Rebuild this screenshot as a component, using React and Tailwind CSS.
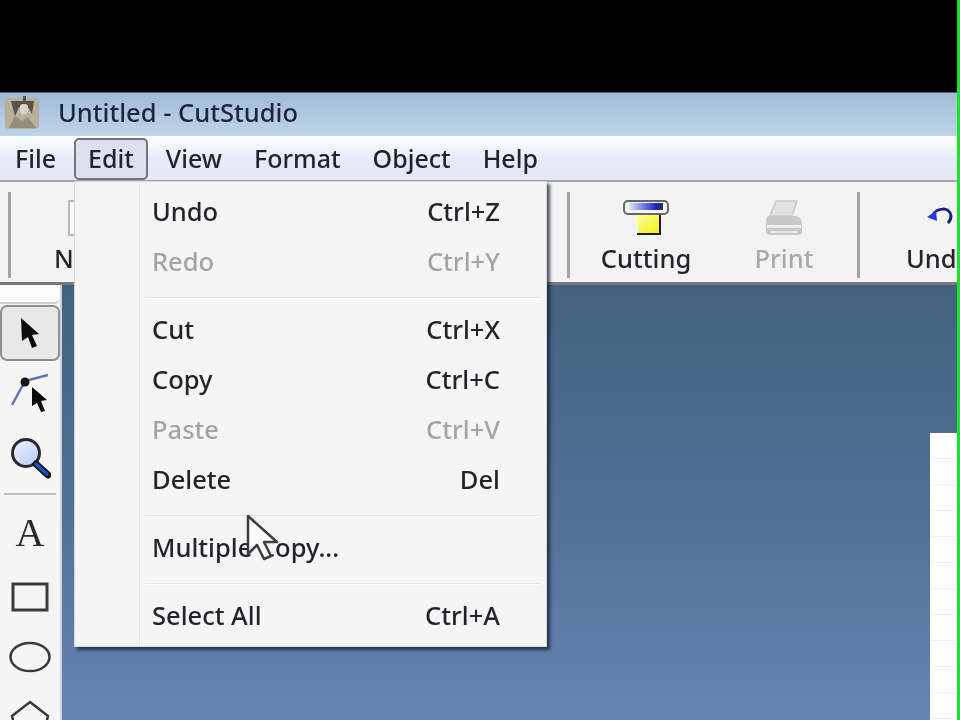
import React from 'react';

const FONT = 'font-["Noto_Sans","Open_Sans",sans-serif]';

const menuBar = ['File', 'Edit', 'View', 'Format', 'Object', 'Help'];

const MenuRow = ({ label, keys, off }) => (
    <div className={`h-[50px] flex items-center justify-between pl-[77px] pr-[46px] ${off ? 'text-[#a4a4a4]' : 'text-[#23232d]'}`}>
        <span>{label}</span>
        <span>{keys}</span>
    </div>
);

const MenuSep = () => (
    <div className="h-[18px] pt-[4px] flex items-center pl-[70px] pr-[6px]">
        <div className="h-[2px] w-full bg-[#e4e4e4] border-b border-white" />
    </div>
);

const Separator = ({ className }) => <div className={`w-[3px] h-[86px] mt-[10px] shrink-0 bg-[#a3a3a3] ${className}`} />;

const Logo = () => (
    <svg width="36" height="34" viewBox="0 0 36 34" className="ml-[4px]">
        <rect x="1" y="2" width="34" height="31" rx="4" fill="#b9b09c" />
        <path d="M7 5 H30 L28 18 L24 11 H15 L11 20 Z" fill="#57524a" />
        <rect x="16" y="8" width="8" height="10" rx="3" fill="#d8d4ca" />
        <path d="M5 32 L11 20 L18 25 L24 21 L32 32 Z" fill="#958d7b" />
        <rect x="19" y="0" width="3" height="5" fill="#57524a" />
    </svg>
);

const NewIcon = () => (
    <svg width="46" height="38" viewBox="0 0 46 38" className="ml-[14px] self-start">
        <rect x="1" y="2" width="30" height="34" fill="#fafafa" stroke="#b8b8b8" strokeWidth="2" />
    </svg>
);

const CuttingIcon = () => (
    <svg width="48" height="38" viewBox="0 0 48 38">
        <defs>
            <linearGradient id="cutBar" x1="0" x2="1" y1="0" y2="0">
                <stop offset="0" stopColor="#dfe3f6" />
                <stop offset="0.8" stopColor="#1c22c8" />
                <stop offset="1" stopColor="#333" />
            </linearGradient>
            <linearGradient id="cutPaper" x1="0" x2="1" y1="0" y2="1">
                <stop offset="0" stopColor="#ffffb0" />
                <stop offset="1" stopColor="#f4ee10" />
            </linearGradient>
        </defs>
        <path d="M14 14 H38 V34 H16 V22 H14 Z" fill="url(#cutPaper)" />
        <path d="M38 15 V35 H15" fill="none" stroke="#1a1a1a" strokeWidth="2" />
        <rect x="2" y="2" width="44" height="13" rx="4" fill="#f4f4f4" stroke="#666" strokeWidth="2" />
        <rect x="7" y="4" width="34" height="7" fill="url(#cutBar)" />
    </svg>
);

const PrintIcon = () => (
    <svg width="40" height="38" viewBox="0 0 40 38">
        <path d="M12 2 H33 L28 17 H6 Z" fill="#e2e2e2" stroke="#cacaca" strokeWidth="1.5" />
        <path d="M4 17 H32 Q38 18 38 26 V33 Q38 36 34 36 H6 Q2 36 2 32 V22 Q2 18 4 17 Z" fill="#c8c8c8" />
        <rect x="3" y="26" width="34" height="3" fill="#ececec" />
        <rect x="6" y="32" width="28" height="2" fill="#e4e4e4" />
    </svg>
);

const UndoIcon = () => (
    <svg width="28" height="20" viewBox="0 0 28 20">
        <path d="M7 9 C10 2 24 0 25 10 C25 13 24 15 22 17" fill="none" stroke="#1c1f78" strokeWidth="3" />
        <path d="M1 11 L10 5 L11 15 Z" fill="#2438e0" />
    </svg>
);

const ArrowIcon = () => (
    <svg width="22" height="32" viewBox="0 0 22 32">
        <path d="M2 1 L20 17 L13 18 L18 29 L13 31 L9 20 L3 24 Z" fill="#0c0c0c" />
    </svg>
);

const NodeIcon = () => (
    <svg width="40" height="40" viewBox="0 0 40 40">
        <path d="M2 32 L15 8 L38 2" fill="none" stroke="#5c76b8" strokeWidth="2.5" />
        <circle cx="15" cy="9" r="4.5" fill="#151515" />
        <path d="M22 14 L37 27 L31 28 L35 38 L31 39 L27 30 L22 33 Z" fill="#0c0c0c" />
    </svg>
);

const ZoomIcon = () => (
    <svg width="42" height="42" viewBox="0 0 42 42">
        <defs>
            <linearGradient id="lens" x1="0" x2="1" y1="0" y2="1">
                <stop offset="0" stopColor="#f2f6ff" />
                <stop offset="1" stopColor="#b4c8f4" />
            </linearGradient>
        </defs>
        <circle cx="17" cy="16" r="13.5" fill="url(#lens)" stroke="#26282e" strokeWidth="3" />
        <path d="M27 27 L39 38" stroke="#12121a" strokeWidth="7" strokeLinecap="round" />
        <path d="M27 27 L38 37" stroke="#1a54c4" strokeWidth="3.5" strokeLinecap="round" />
    </svg>
);

const RectIcon = () => (
    <svg width="38" height="30" viewBox="0 0 38 30">
        <rect x="2" y="2" width="34" height="26" fill="none" stroke="#3a3a3a" strokeWidth="3" />
    </svg>
);

const EllipseIcon = () => (
    <svg width="42" height="32" viewBox="0 0 42 32">
        <ellipse cx="21" cy="16" rx="19.5" ry="14" fill="none" stroke="#3a3a3a" strokeWidth="2.5" />
    </svg>
);

const PentagonIcon = () => (
    <svg width="40" height="30" viewBox="0 0 40 30" className="shrink-0">
        <path d="M20 2 L38 16 L32 40 H8 L2 16 Z" fill="none" stroke="#3a3a3a" strokeWidth="2.5" />
    </svg>
);

const CursorIcon = () => (
    <svg width="34" height="48" viewBox="0 0 34 48">
        <path d="M2 2 L2 40 L11 31 L18 45 L25 42 L18 28 L31 28 Z" fill="#fafafa" stroke="#3c3c42" strokeWidth="2.5" strokeLinejoin="round" />
    </svg>
);

const App = () => {
    return (
        <div className={`${FONT} relative w-[960px] h-[720px] overflow-hidden flex flex-col bg-black border-r-[3px] border-[#1fe030] text-[25.5px] font-medium leading-none text-[#23232d] blur-[0.4px]`}>
            <div className="h-[92px] shrink-0 bg-black" />

            {/* title bar */}
            <div className="h-[44px] shrink-0 flex items-center pb-[4px] bg-gradient-to-b from-[#a1bbd6] to-[#bed4ea] border-t border-[#55677c]">
                <Logo />
                <span className="ml-[18px] text-[#1f2540]">Untitled - CutStudio</span>
            </div>

            {/* menu bar */}
            <div className="h-[46px] shrink-0 flex items-end pl-[1px] text-[25px] bg-gradient-to-b from-[#fdfeff] via-[#e6ecf7] to-[#e2e8f4] border-b-2 border-[#a4a6aa]">
                {menuBar.map((name) => (
                    <div
                        key={name}
                        className={`h-[42px] px-[12px] pb-[2px] mr-[4px] flex items-center rounded-[5px] border-2 ${name === 'Edit' ? 'border-[#71757e] bg-[#dbe1ee]' : 'border-transparent'}`}
                    >
                        {name}
                    </div>
                ))}
            </div>

            {/* toolbar */}
            <div className="h-[103px] shrink-0 flex items-start bg-[#f3f3f3] border-b-[3px] border-[#77797d]">
                <Separator className="ml-[8px]" />
                <div className="w-[60px] shrink-0 ml-[43px] mt-[17px] flex flex-col">
                    <NewIcon />
                    <span className="mt-[9px]">New</span>
                </div>
                <Separator className="ml-[453px]" />
                <div className="w-[90px] shrink-0 ml-[31px] mt-[17px] flex flex-col items-center">
                    <CuttingIcon />
                    <span className="mt-[9px]">Cutting</span>
                </div>
                <div className="w-[60px] shrink-0 ml-[63px] mt-[17px] flex flex-col items-center text-[#a9a9a9]">
                    <PrintIcon />
                    <span className="mt-[9px]">Print</span>
                </div>
                <Separator className="ml-[43px]" />
                <div className="shrink-0 ml-[46px] mt-[24px] flex flex-col items-start">
                    <div className="ml-[20px] mb-[20px]"><UndoIcon /></div>
                    <span>Undo</span>
                </div>
            </div>

            {/* workspace */}
            <div className="flex-1 min-h-0 flex">
                <div className="w-[62px] shrink-0 flex flex-col items-center bg-[#f5f5f5] border-r-2 border-[#cfd2d6] overflow-hidden">
                    <div className="w-full h-[19px] shrink-0 bg-[#fbfbfb] border-b-2 border-[#d0d0d0] rounded-br-[6px]" />
                    <div className="w-[60px] h-[56px] shrink-0 mt-[1px] flex items-center justify-center rounded-[7px] border-2 border-[#8d8f93] bg-[#e8e8e8]">
                        <ArrowIcon />
                    </div>
                    <div className="h-[40px] shrink-0 mt-[12px]"><NodeIcon /></div>
                    <div className="h-[42px] shrink-0 mt-[24px]"><ZoomIcon /></div>
                    <div className="w-[52px] h-[2px] shrink-0 mt-[14px] bg-[#c0c0c0]" />
                    <div className='h-[40px] shrink-0 mt-[18px] flex items-center font-["Liberation_Serif",serif] text-[40px] font-normal text-[#2a2a2a]'>A</div>
                    <div className="h-[30px] shrink-0 mt-[29px]"><RectIcon /></div>
                    <div className="h-[32px] shrink-0 mt-[29px]"><EllipseIcon /></div>
                    <div className="h-[30px] shrink-0 mt-[27px]"><PentagonIcon /></div>
                </div>

                <div className="flex-1 flex flex-col items-end pt-[148px] bg-gradient-to-b from-[#42627f] via-[#4f7096] to-[#6684b2]">
                    <div className="w-[27px] flex-1 bg-white bg-[repeating-linear-gradient(to_bottom,transparent_0,transparent_25px,#f0f0f0_25px,#f0f0f0_26px)]" />
                </div>
            </div>

            {/* Edit menu */}
            <div className="absolute left-[74px] top-[181px] w-[473px] h-[466px] pt-[5px] bg-[#f5f5f5] border border-[#d8d8d8] shadow-[3px_3px_3px_rgba(20,30,50,0.75)]">
                <div className="absolute left-[64px] top-0 bottom-0 w-[2px] bg-[#e8e8e8] border-r border-white" />
                <MenuRow label="Undo" keys="Ctrl+Z" />
                <MenuRow label="Redo" keys="Ctrl+Y" off />
                <MenuSep />
                <MenuRow label="Cut" keys="Ctrl+X" />
                <MenuRow label="Copy" keys="Ctrl+C" />
                <MenuRow label="Paste" keys="Ctrl+V" off />
                <MenuRow label="Delete" keys="Del" />
                <MenuSep />
                <MenuRow label="Multiple Copy..." />
                <MenuSep />
                <MenuRow label="Select All" keys="Ctrl+A" />
            </div>

            <div className="absolute left-[246px] top-[514px]">
                <CursorIcon />
            </div>
        </div>
    );
};

export default App;
